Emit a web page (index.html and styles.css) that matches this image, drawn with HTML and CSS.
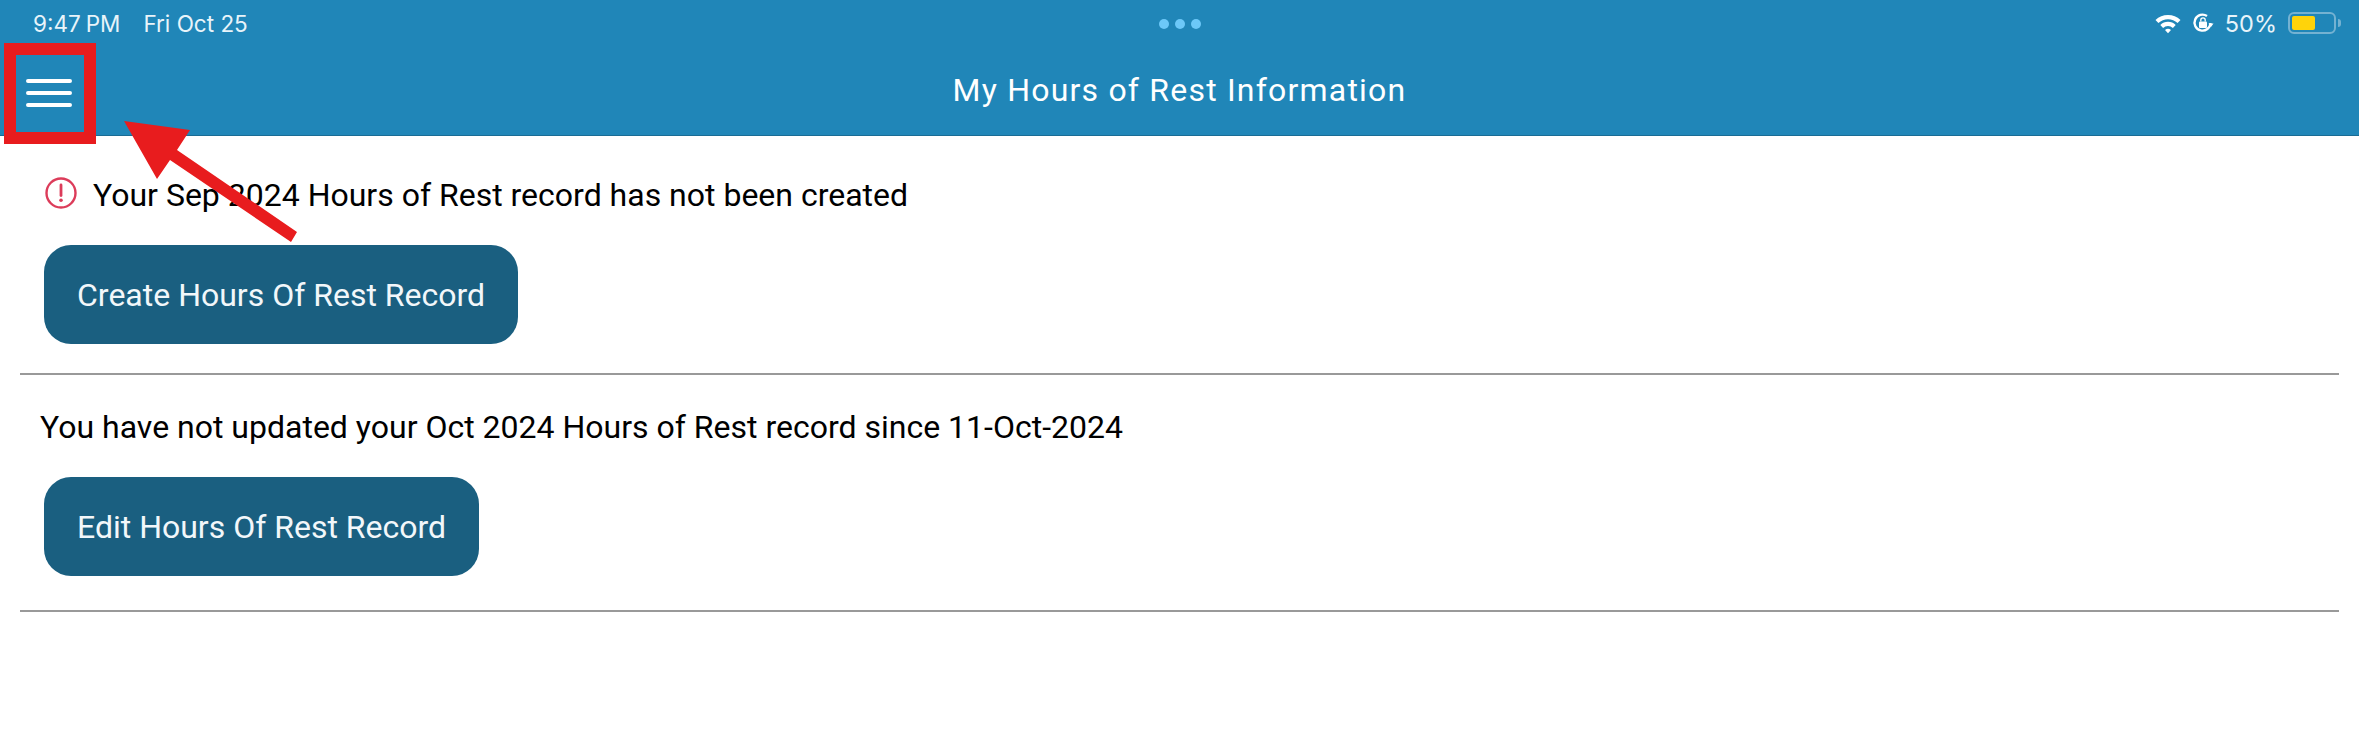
FILE: index.html
```html
<!DOCTYPE html>
<html lang="en">
<head>
<meta charset="utf-8">
<title>My Hours of Rest Information</title>
<link rel="stylesheet" href="styles.css">
</head>
<body>
<header class="top">
  <div class="status">
    <div class="status-left"><span class="time">9:47<span class="pm">PM</span></span><span>Fri Oct 25</span></div>
    <div class="dots"><i></i><i></i><i></i></div>
    <div class="status-right">
      <svg class="wifi" width="28" height="22" viewBox="0 0 28 22"><path d="M1.5 8 A18 18 0 0 1 26.5 8 L23.6 11 A14 14 0 0 0 4.4 11Z M6.3 13 A11 11 0 0 1 21.7 13 L18.9 16 A7 7 0 0 0 9.1 16Z M11 18 A4.5 4.5 0 0 1 17 18 L14 21.2Z" fill="#fff"/></svg>
      <svg class="lock" width="22" height="22" viewBox="0 0 22 22"><path d="M18.5 11 A8 8 0 1 1 15 4" fill="none" stroke="#fff" stroke-width="2.4"/><path d="M16.5 11.5 L21.5 11.5 L19 15Z" fill="#fff"/><rect x="7" y="9.5" width="8" height="6.5" rx="1" fill="#fff"/><path d="M8.8 9.5 V8 A2.2 2.2 0 0 1 13.2 8 V9.5" fill="none" stroke="#fff" stroke-width="1.3"/></svg>
      <span class="pct">50%</span>
      <div class="battery"><div class="charge"></div></div><div class="nub"></div>
    </div>
  </div>
  <div class="nav">
    <svg class="burger" width="46" height="28" viewBox="0 0 46 28"><path d="M2 2H44M2 14H44M2 26H44" stroke="#fff" stroke-width="4" stroke-linecap="round"/></svg>
    <h1 class="title">My Hours of Rest Information</h1>
  </div>
</header>
<main class="content">
  <section class="block first">
    <p class="msg"><svg class="alert" width="34" height="34" viewBox="0 0 34 34"><circle cx="17" cy="17" r="14.5" fill="none" stroke="#dc3c5a" stroke-width="2.4"/><path d="M17 9V19.5" stroke="#dc3c5a" stroke-width="2.8" stroke-linecap="round"/><circle cx="17" cy="24.3" r="1.8" fill="#dc3c5a"/></svg>Your Sep 2024 Hours of Rest record has not been created</p>
    <button class="btn">Create Hours Of Rest Record</button>
  </section>
  <section class="block">
    <p class="msg plain">You have not updated your Oct 2024 Hours of Rest record since 11-Oct-2024</p>
    <button class="btn">Edit Hours Of Rest Record</button>
  </section>
</main>
<div class="mark-box"></div>
<svg class="mark-arrow" width="2359" height="752" viewBox="0 0 2359 752"><path d="M124 121L190 130L177 150L297 232L291 242L170 160L157 179Z" fill="#e81c1e"/></svg>
</body>
</html>
```
FILE: styles.css
```css
* { box-sizing: border-box; }
html, body { margin: 0; padding: 0; }
body { width: 2359px; height: 752px; background: #fff; color: #000; font-family: "Roboto", "Liberation Sans", sans-serif; overflow: hidden; position: relative; }
.top { height: 136px; background: #2086b8; border-bottom: 1px solid #1a6c94; color: #fff; }
.status { height: 46px; display: flex; align-items: center; justify-content: space-between; padding: 0 18px 0 33px; position: relative; font-family: "Inter", sans-serif; font-size: 22.5px; color: #e8f4fa; }
.status-left { display: flex; gap: 23px; }
.time { display: inline-flex; gap: 5px; }
.dots { position: absolute; left: 1159px; top: 19px; display: flex; gap: 6px; }
.dots i { width: 10px; height: 10px; border-radius: 50%; background: #6cc8f8; }
.status-right { display: flex; align-items: center; }
.wifi { margin-right: 10px; }
.lock { margin-right: 11px; }
.pct { margin-right: 11px; font-size: 23.5px; }
.battery { width: 48px; height: 22px; border: 2px solid #74b2d2; border-radius: 6px; padding: 2px; }
.charge { width: 21px; height: 14px; border-radius: 2px; background: #ffd30a; width: 58%; }
.nub { width: 3px; height: 8px; background: #74b2d2; margin-left: 2px; border-radius: 0 3px 3px 0; }
.nav { height: 89px; position: relative; display: flex; align-items: center; justify-content: center; }
.burger { position: absolute; left: 26px; top: 33px; }
.title { margin: 0 0 1px; font-size: 32px; font-weight: 400; letter-spacing: 1.2px; color: #fff; }
.content { padding: 0 20px; }
.block { border-bottom: 2px solid #999; height: 237px; padding-top: 31px; }
.block.first { height: 239px; padding-top: 38px; }
.msg { margin: 0 0 28px; height: 43px; font-size: 32px; line-height: 43px; padding-left: 24px; display: flex; align-items: center; white-space: nowrap; }
.msg.plain { padding-left: 20px; }
.alert { margin-right: 15px; margin-top: -5px; }
.btn { display: block; margin-left: 24px; height: 99px; padding: 0 33px; border: 0; border-radius: 27px; background: #1a5f80; color: #f2f7fa; font-family: inherit; font-size: 32px; }
.mark-box { position: absolute; left: 4px; top: 43px; width: 92px; height: 101px; border: 12px solid #e81c1e; }
.mark-arrow { position: absolute; left: 0; top: 0; }
```
